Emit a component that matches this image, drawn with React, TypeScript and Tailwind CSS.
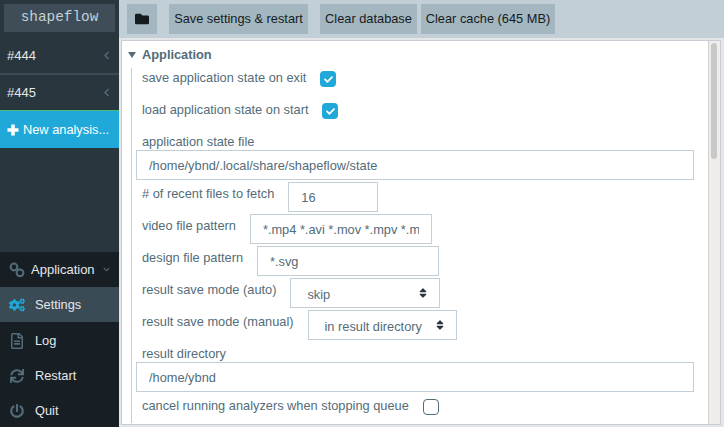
import { FaChevronLeft, FaChevronDown, FaCogs, FaFolder, FaPowerOff, FaSync, FaCheck, FaRegFileAlt, FaSort } from 'react-icons/fa';

const FONT = "font-['Liberation_Sans',Arial,sans-serif]";

function LinkIcon() {
  return (
    <svg width="16" height="16" viewBox="0 0 16 16" fill="none" stroke="#536c79" strokeWidth="2">
      <circle cx="5" cy="5" r="3.4" />
      <circle cx="11" cy="10.8" r="3.4" />
    </svg>
  );
}

function PlusIcon() {
  return (
    <svg width="12" height="12" viewBox="0 0 12 12" fill="#fff">
      <path d="M4.2 0.5h3.6v3.7h3.7v3.6H7.8v3.7H4.2V7.8H0.5V4.2h3.7z" />
    </svg>
  );
}

function QueueItem({ label }: { label: string }) {
  return (
    <div className="h-[35px] shrink-0 flex items-center justify-between pl-[7px] pr-[9px] text-[#e4e7ea] text-[13px]">
      <span>{label}</span>
      <FaChevronLeft className="text-[#536c79] w-[7px] h-[9px]" />
    </div>
  );
}

function NavItem({ label, icon, active, className = '' }: { label: string; icon: React.ReactNode; active?: boolean; className?: string }) {
  return (
    <div className={`h-[35px] flex items-center text-[12.8px] text-[#e4e7ea] ${active ? 'bg-[#3a4b56]' : ''} ${className}`}>
      <span className="w-[35px] pr-px flex justify-center">{icon}</span>
      <span>{label}</span>
    </div>
  );
}

function Btn({ children, className = '' }: { children: React.ReactNode; className?: string }) {
  return (
    <button className={`h-[30px] bg-[#a4b7c1] text-[#151b1e] text-[12.8px] flex items-center justify-center whitespace-nowrap ${className}`}>
      {children}
    </button>
  );
}

function Check({ on, className = '' }: { on?: boolean; className?: string }) {
  return (
    <span
      className={`w-4 h-4 rounded-[4px] flex items-center justify-center shrink-0 ${className} ${
        on ? 'bg-[#20a8d8]' : 'bg-white border border-[#536c79]'
      }`}
    >
      {on && <FaCheck className="text-white w-[9px] h-[9px]" />}
    </span>
  );
}

function Label({ children, className = 'leading-[20px] mt-[2px]' }: { children: React.ReactNode; className?: string }) {
  return <span className={`block text-[12.8px] whitespace-nowrap ${className}`}>{children}</span>;
}

function Field({ value, className = '' }: { value: string; className?: string }) {
  return (
    <input
      readOnly
      value={value}
      className={`h-[30px] border border-[#c2cfd6] bg-white px-3 pt-px text-[12.8px] outline-none block ${className}`}
    />
  );
}

function Select({ value, className = '' }: { value: string; className?: string }) {
  return (
    <div className={`h-[30px] border border-[#c2cfd6] bg-white pl-4 pr-3 flex items-center justify-between text-[12.8px] ${className}`}>
      <span className="pt-[3px]">{value}</span>
      <FaSort className="text-[#29363d] w-[8px] h-[12px]" />
    </div>
  );
}

function Row({ children, className = 'h-[30px] mb-[2px]' }: { children: React.ReactNode; className?: string }) {
  return <div className={`flex items-start gap-3.5 pl-[10px] ${className}`}>{children}</div>;
}

export default function App() {
  return (
    <div className={`w-[724px] h-[427px] flex overflow-hidden bg-[#e4e5e6] ${FONT}`}>
      <aside className="w-[119px] shrink-0 bg-[#29363d] flex flex-col overflow-hidden">
        <div className="h-[38px] shrink-0 pt-1 px-1">
          <div className="h-7 bg-[#3e4d57] text-[#c2cfd6] text-[14.4px] flex items-center justify-center font-['Liberation_Mono',monospace]">
            shapeflow
          </div>
        </div>
        <QueueItem label="#444" />
        <div className="h-[2px] shrink-0 bg-[#3a4b56]" />
        <QueueItem label="#445" />
        <div className="h-px shrink-0 bg-[#4dbd74]" />
        <div className="h-[37px] shrink-0 bg-[#20a8d8] flex items-center pl-[7px] gap-[4px] text-white text-[12.8px]">
          <PlusIcon />
          <span>New analysis...</span>
        </div>
        <div className="h-[104px] shrink-0" />
        <div className="bg-[#181f24] shrink-0">
          <div className="h-[35px] flex items-center text-[13px] text-[#e4e7ea]">
            <span className="w-[31px] pl-[2px] flex justify-center"><LinkIcon /></span>
            <span className="flex-1">Application</span>
            <FaChevronDown className="text-[#536c79] w-[7px] h-[7px] mr-[9px]" />
          </div>
          <NavItem label="Settings" active icon={<FaCogs className="text-[#20a8d8] w-[16px] h-[16px]" />} />
          <NavItem label="Log" className="mt-px" icon={<FaRegFileAlt className="text-[#536c79] w-[12px] h-[16px]" />} />
          <NavItem label="Restart" icon={<FaSync className="text-[#536c79] w-[14px] h-[14px]" />} />
          <NavItem label="Quit" icon={<FaPowerOff className="text-[#536c79] w-[14px] h-[14px]" />} />
        </div>
      </aside>

      <main className="flex-1 flex flex-col min-w-0">
        <div className="h-[38px] shrink-0 bg-[#c2cfd6] flex items-start pt-1 pl-2">
          <Btn className="w-[30px] mr-3"><FaFolder className="w-[14px] h-[14px]" /></Btn>
          <Btn className="w-[139px] mr-3">Save settings &amp; restart</Btn>
          <Btn className="w-[97px] mr-1">Clear database</Btn>
          <Btn className="w-[134px]">Clear cache (645 MB)</Btn>
        </div>

        <div className="flex-1 min-h-0 pt-[2px] pl-[2px] pr-[3px] pb-[2px]">
          <div className="h-full border border-[#c8ced3] bg-white flex overflow-hidden">
            <div className="flex-1 min-w-0 text-[#536c79] pr-[14px]">
              <div className="flex items-center h-[27px] pl-[6px] gap-[6px] font-bold text-[12.8px]">
                <span className="w-0 h-0 border-x-[4px] border-x-transparent border-t-[6px] border-t-[#536c79]" />
                <span>Application</span>
              </div>
              <div className="ml-[9px] border-l border-[#c2cfd6] h-[355px]">
                <Row>
                  <Label className="leading-[20px]">save application state on exit</Label>
                  <Check on className="mt-[3px]" />
                </Row>
                <Row>
                  <Label className="leading-[20px]">load application state on start</Label>
                  <Check on className="mt-[3px]" />
                </Row>
                <Row className="h-[18px]"><Label className="leading-[20px]">application state file</Label></Row>
                <div className="pl-[4px] mb-[2px]"><Field value="/home/ybnd/.local/share/shapeflow/state" className="w-full" /></div>
                <Row><Label>{'# of recent files to fetch'}</Label><Field value="16" className="w-[90px]" /></Row>
                <Row><Label>video file pattern</Label><Field value="*.mp4 *.avi *.mov *.mpv *.mkv" className="w-[182px]" /></Row>
                <Row><Label>design file pattern</Label><Field value="*.svg" className="w-[182px]" /></Row>
                <Row><Label>result save mode (auto)</Label><Select value="skip" className="w-[150px]" /></Row>
                <Row><Label>result save mode (manual)</Label><Select value="in result directory" className="w-[149px]" /></Row>
                <Row className="h-[20px]"><Label>result directory</Label></Row>
                <div className="pl-[4px] mb-[2px]"><Field value="/home/ybnd" className="w-full" /></div>
                <Row className="h-[26px]">
                  <Label>cancel running analyzers when stopping queue</Label>
                  <Check className="mt-[5px]" />
                </Row>
              </div>
            </div>
            <div className="w-[12px] shrink-0 bg-[#efedec] border-l border-[#d5cfcb] pt-[2px] pl-[2px]">
              <div className="w-[6px] h-[116px] rounded-[3px] bg-[#c8c8c8]" />
            </div>
          </div>
        </div>
      </main>
    </div>
  );
}
